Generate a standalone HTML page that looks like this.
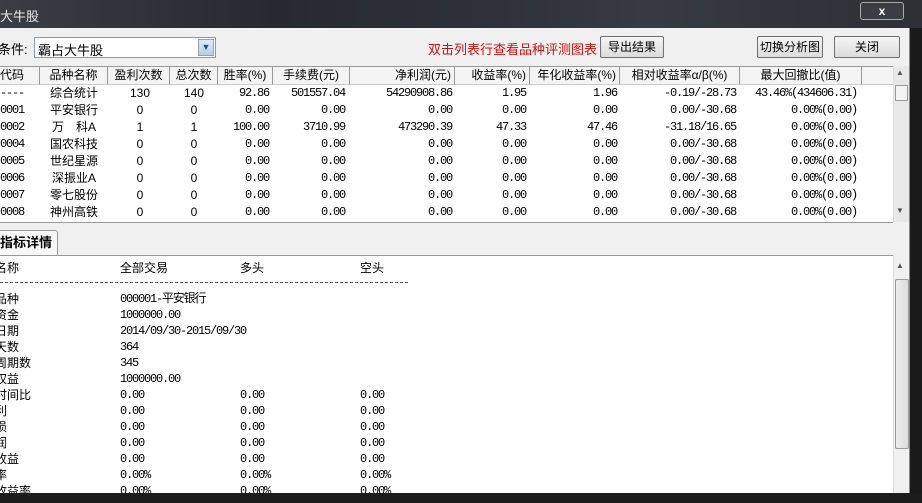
<!DOCTYPE html>
<html><head><meta charset="utf-8"><style>
*{margin:0;padding:0;box-sizing:border-box}
body{width:922px;height:503px;overflow:hidden;background:#1a1a1a;font-family:"Liberation Sans","Noto Sans CJK SC",sans-serif;font-size:12px;color:#000;position:relative}
.abs{position:absolute}
.title{left:0;top:0;width:922px;height:28px;background:linear-gradient(90deg,#3a3d44,#262a30 30%,#2d3038 50%,#363a42 70%,#2e3035);}
.dlg{left:0;top:28px;width:910px;height:465px;background:#f0f0f0;border-right:1px solid #888}
.btn{position:absolute;height:22px;border:1px solid #707070;border-radius:2px;background:linear-gradient(#f4f4f4,#dcdcdc);text-align:center;line-height:20px;font-size:12px;white-space:nowrap}
.tbl{left:0;top:66px;width:893px;height:156px;background:#fff;border-top:1px solid #999}
.hd{position:absolute;top:0;height:18px;line-height:17px;font-size:12px;border-right:1px solid #999;background:#f4f4f4;border-bottom:1px solid #ccc;text-align:center;white-space:nowrap;overflow:hidden}
.c{position:absolute;height:17px;line-height:17px;white-space:nowrap;font-family:"Liberation Mono","Noto Sans CJK SC",monospace;font-size:12px;letter-spacing:-1.2px}
.r{text-align:right}.m{text-align:center}
.sb{background:#e8e8e8;border-left:1px solid #ddd}
.bot{left:0;top:255px;width:893px;height:238px;background:#fff;border-top:1px solid #999;overflow:hidden}
.t{position:absolute;font-family:"Liberation Mono","Noto Sans CJK SC",monospace;font-size:12px;white-space:nowrap;line-height:16px;letter-spacing:-1.2px}
.k{letter-spacing:0;font-family:"Liberation Sans","Noto Sans CJK SC",sans-serif}
</style></head><body>
<div class="abs title"><div class="abs" style="left:0;top:6px;color:#e8e8e8;font-size:13px">大牛股</div>
<div class="abs" style="left:860px;top:2px;width:44px;height:18px;border:1px solid #aaa;border-radius:3px;background:#3a3d44;color:#fff;text-align:center;font-weight:bold;line-height:16px">x</div></div>
<div class="abs dlg">
<div class="abs" style="left:-2px;top:11px;font-size:13px">条件:</div>
<div class="abs" style="left:34px;top:9px;width:182px;height:21px;background:#fff;border:1px solid #7a9cc2"><span class="abs" style="left:3px;top:2px;font-size:13px">霸占大牛股</span><div class="abs" style="right:1px;top:1px;width:16px;height:17px;background:linear-gradient(#dfeaf8,#b7cde8);border:1px solid #8aa3c4;color:#2b4f80;font-size:9px;text-align:center;line-height:15px">▼</div></div>
<div class="abs" style="left:428px;top:11px;color:#d01010;font-size:13px">双击列表行查看品种评测图表</div>
<div class="btn" style="left:600px;top:8px;width:64px">导出结果</div>
<div class="btn" style="left:757px;top:8px;width:66px">切换分析图</div>
<div class="btn" style="left:834px;top:8px;width:66px">关闭</div>
</div>
<div class="abs tbl">
<div class="hd" style="left:0;width:40px;text-align:left">代码</div>
<div class="hd" style="left:40px;width:68px">品种名称</div>
<div class="hd" style="left:108px;width:62px">盈利次数</div>
<div class="hd" style="left:170px;width:48px">总次数</div>
<div class="hd" style="left:218px;width:55px">胜率(%)</div>
<div class="hd" style="left:273px;width:77px">手续费(元)</div>
<div class="hd" style="left:350px;width:105px;text-align:right;padding-right:3px">净利润(元)</div>
<div class="hd" style="left:455px;width:75px;text-align:right;padding-right:3px">收益率(%)</div>
<div class="hd" style="left:530px;width:90px;text-align:right;padding-right:3px">年化收益率(%)</div>
<div class="hd" style="left:620px;width:120px">相对收益率α/β(%)</div>
<div class="hd" style="left:740px;width:122px">最大回撤比(值)</div>
<div class="hd" style="left:862px;width:31px;border-right:none"></div>
<div id="rows"></div>
</div>
<div class="abs sb" style="left:893px;top:66px;width:16px;height:156px"><div class="abs" style="left:2px;top:2px;font-size:8px;color:#555">▲</div><div class="abs" style="left:1px;top:19px;width:13px;height:16px;background:#f4f4f4;border:1px solid #999"></div><div class="abs" style="left:2px;top:140px;font-size:8px;color:#555">▼</div></div>
<div class="abs" style="left:0;top:222px;width:893px;height:33px;background:#f0f0f0;border-top:1px solid #999"></div>
<div class="abs" style="left:0;top:230px;width:58px;height:26px;background:#f8f8f8;border:1px solid #999;border-bottom:none;border-left:none;border-radius:0 3px 0 0;font-weight:bold;font-size:13px;line-height:24px;padding-left:0">指标详情</div>
<div class="abs bot">
<div class="t k" style="left:-5px;top:4px">名称</div><div class="t k" style="left:120px;top:4px">全部交易</div><div class="t k" style="left:240px;top:4px">多头</div><div class="t k" style="left:360px;top:4px">空头</div>
<div class="abs" style="left:0;top:26px;width:408px;border-top:1px dashed #555"></div>
<div id="det"></div>
</div>
<div class="abs sb" style="left:893px;top:255px;width:16px;height:238px;background:#f0f0f0"><div class="abs" style="left:2px;top:6px;font-size:8px;color:#555">▲</div><div class="abs" style="left:1px;top:24px;width:14px;height:170px;background:linear-gradient(90deg,#eee,#ddd);border:1px solid #999;border-radius:2px"></div></div>
<div class="abs" style="left:0;top:493px;width:922px;height:10px;background:#1c1c1c"></div>
<script>
var R=[["----","综合统计","130","140","92.86","501557.04","54290908.86","1.95","1.96","-0.19/-28.73","43.46%(434606.31)"],
["0001","平安银行","0","0","0.00","0.00","0.00","0.00","0.00","0.00/-30.68","0.00%(0.00)"],
["0002","万　科A","1","1","100.00","3710.99","473290.39","47.33","47.46","-31.18/16.65","0.00%(0.00)"],
["0004","国农科技","0","0","0.00","0.00","0.00","0.00","0.00","0.00/-30.68","0.00%(0.00)"],
["0005","世纪星源","0","0","0.00","0.00","0.00","0.00","0.00","0.00/-30.68","0.00%(0.00)"],
["0006","深振业A","0","0","0.00","0.00","0.00","0.00","0.00","0.00/-30.68","0.00%(0.00)"],
["0007","零七股份","0","0","0.00","0.00","0.00","0.00","0.00","0.00/-30.68","0.00%(0.00)"],
["0008","神州高铁","0","0","0.00","0.00","0.00","0.00","0.00","0.00/-30.68","0.00%(0.00)"]];
var C=[[0,40,'l'],[40,68,'m'],[108,64,'m'],[170,48,'m'],[218,51,'r'],[273,72,'r'],[350,102,'r'],[455,71,'r'],[530,87,'r'],[620,116,'r'],[740,117,'r']];
var h='';R.forEach(function(r,i){r.forEach(function(v,j){var c=C[j];h+='<div class="c '+(c[2]=='r'?'r':c[2]=='m'?'m k':'')+'" style="left:'+c[0]+'px;width:'+c[1]+'px;top:'+(18+i*17)+'px">'+v+'</div>'})});
document.getElementById('rows').innerHTML=h;
var D=[["品种","000001-平安银行"],["资金","1000000.00"],["日期","2014/09/30-2015/09/30"],["天数","364"],["周期数","345"],["权益","1000000.00"],["时间比","0.00","0.00","0.00"],["利","0.00","0.00","0.00"],["损","0.00","0.00","0.00"],["润","0.00","0.00","0.00"],["收益","0.00","0.00","0.00"],["率","0.00%","0.00%","0.00%"],["收益率","0.00%","0.00%","0.00%"]];
h='';D.forEach(function(r,i){r.forEach(function(v,j){h+='<div class="t'+(j==0?' k':'')+'" style="left:'+(j==0?-5:j*120)+'px;top:'+(35+i*16)+'px">'+v+'</div>'})});
document.getElementById('det').innerHTML=h;
</script>
</body></html>
